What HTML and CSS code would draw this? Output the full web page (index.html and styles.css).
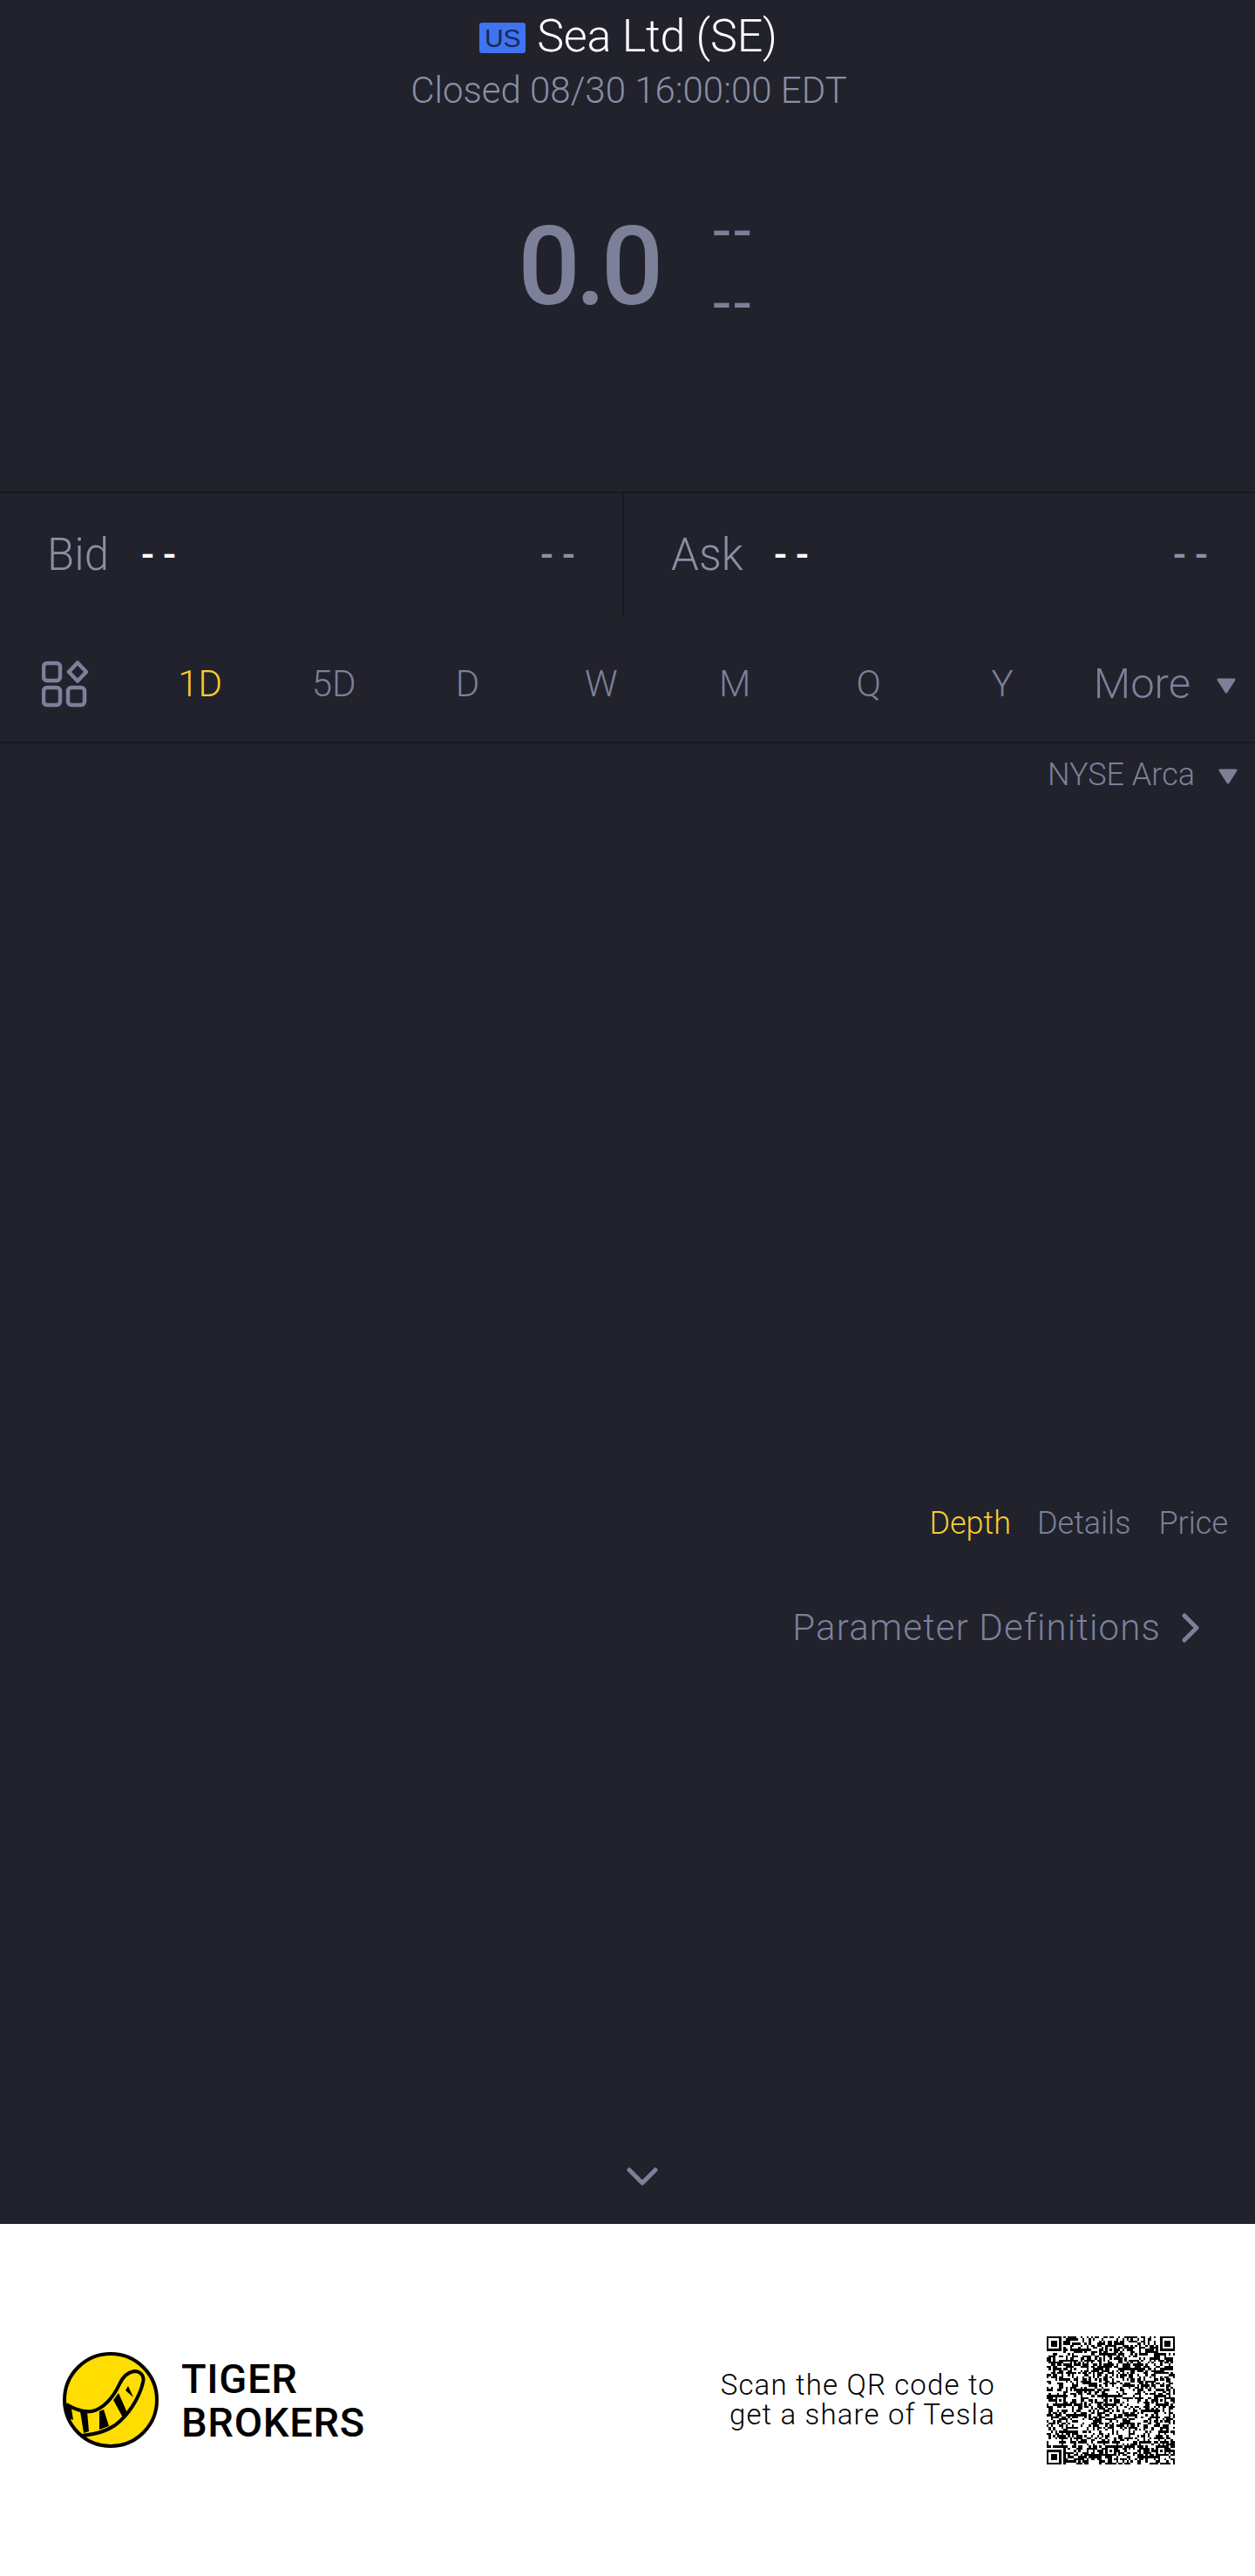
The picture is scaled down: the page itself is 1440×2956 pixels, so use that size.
FILE: index.html
```html
<!DOCTYPE html>
<html lang="en">
<head>
    <meta charset="UTF-8" />
    <title>Sea Ltd (SE)</title>
    <link rel="stylesheet" href="styles.css">
</head>
<body>
    <div class="quote">
        <div class="head">
            <div class="title"><span class="badge">US</span><span>Sea Ltd (SE)</span></div>
            <div class="status">Closed 08/30 16:00:00 EDT</div>
        </div>
        <div class="price-row">
            <div class="price">0.0</div>
            <div class="change"><span>--</span><span>--</span></div>
        </div>
        <div class="book">
            <div class="side">
                <span class="side-label">Bid</span><span class="dash white">--</span><span class="dash right">--</span>
            </div>
            <div class="side">
                <span class="side-label">Ask</span><span class="dash white">--</span><span class="dash right">--</span>
            </div>
        </div>
        <div class="tabs">
            <div class="tab-icon">
                <svg width="56" height="54" viewBox="0 0 56 54" fill="none" stroke="#7c8099" stroke-width="4.5">
                    <rect x="2" y="3" width="19" height="20" rx="4" />
                    <path d="M41 2.5 L51 13 L41 23.5 L31 13 Z" stroke-linejoin="round" />
                    <rect x="2" y="31" width="19" height="20" rx="4" />
                    <rect x="30" y="31" width="19" height="20" rx="4" />
                </svg>
            </div>
            <div class="tab active">1D</div>
            <div class="tab">5D</div>
            <div class="tab">D</div>
            <div class="tab">W</div>
            <div class="tab">M</div>
            <div class="tab">Q</div>
            <div class="tab">Y</div>
            <div class="tab-more">
                <span>More</span>
                <svg class="tri" width="22" height="18" viewBox="0 0 22 18"><path d="M2 2 H20 L11 16 Z" fill="#7c8099" stroke="#7c8099" stroke-width="3" stroke-linejoin="round" /></svg>
            </div>
        </div>
        <div class="chart">
            <div class="exchange">
                <span>NYSE Arca</span>
                <svg class="tri" width="22" height="18" viewBox="0 0 22 18"><path d="M2 2 H20 L11 16 Z" fill="#7c8099" stroke="#7c8099" stroke-width="3" stroke-linejoin="round" /></svg>
            </div>
            <div class="detail-tabs">
                <span class="active">Depth</span>
                <span>Details</span>
                <span class="last">Price</span>
            </div>
            <div class="params">
                <span>Parameter Definitions</span>
                <svg width="20" height="34" viewBox="0 0 20 34" fill="none" stroke="#7c8099" stroke-width="5" stroke-linecap="round" stroke-linejoin="round"><path d="M3 3 L17 17 L3 31" /></svg>
            </div>
            <div class="collapse">
                <svg width="36" height="22" viewBox="0 0 36 22" fill="none" stroke="#7c8099" stroke-width="5" stroke-linecap="round" stroke-linejoin="round"><path d="M3 3 L18 18 L33 3" /></svg>
            </div>
        </div>
    </div>
    <div class="footer">
        <div class="brand">
            <svg width="112" height="112" viewBox="-1 -1 112 112">
                <circle cx="55" cy="55" r="53" fill="#ffdd00" stroke="#000" stroke-width="4" />
                <path d="M4 60 C14 66 24 69 33 68 C46 66 58 52 65 37 C69 28 75 23 82 22 C90 22 94 28 92 35 C88 52 76 72 60 84 C48 92 34 95 22 96" fill="none" stroke="#000" stroke-width="4" stroke-linejoin="round" />
                <path d="M3 60 L10 65 L12 78 L6 76 Z M20 68 L28 68 L30 91 L24 93 Z M42 68 L47 66 L53 85 L42 89 Z M58 55 L64 47 L75 72 L70 77 Z M72 44 L75 39 L81 52 Z" fill="#000" />
            </svg>
            <div class="brand-name">TIGER<br>BROKERS</div>
        </div>
        <div class="scan">
            <div class="scan-text">Scan the QR code to<br>get a share of Tesla</div>
            <svg id="qr" class="qr" viewBox="0 0 61 61" shape-rendering="crispEdges"></svg>
        </div>
    </div>
    <script src="qr.js"></script>
</body>
</html>
```

FILE: styles.css
```css
* {
    box-sizing: border-box;
}
body {
    margin: 0;
    font-family: Roboto, "Liberation Sans", sans-serif;
    font-weight: 300;
    background: #fff;
}
.quote {
    height: 2552px;
    background: #21222c;
    color: #7c8099;
    display: flex;
    flex-direction: column;
}

/* header */
.head {
    padding-top: 12px;
    text-align: center;
}
.title {
    display: flex;
    justify-content: center;
    align-items: center;
    gap: 13px;
    padding-left: 2px;
    font-size: 52px;
    line-height: 60px;
    letter-spacing: -0.2px;
    color: #fff;
}
.badge {
    width: 53px;
    height: 35px;
    margin-top: 2px;
    border-radius: 3px;
    background: #3f74f0;
    color: #17285c;
    font-family: "Liberation Sans", sans-serif;
    font-weight: 400;
    font-size: 30px;
    line-height: 35px;
    letter-spacing: 0;
    text-align: center;
}
.status {
    margin-top: 7px;
    padding-left: 3px;
    font-size: 42px;
    line-height: 50px;
    color: #8a8fa5;
}

.price-row {
    display: flex;
    justify-content: center;
    align-items: center;
    gap: 62px;
    height: 130px;
    margin-top: 112px;
    padding-left: 20px;
}
.price {
    font-size: 126px;
    font-weight: 500;
    line-height: 130px;
    letter-spacing: -5.5px;
}
.change {
    display: flex;
    flex-direction: column;
    gap: 43px;
    font-size: 72px;
    font-weight: 400;
    line-height: 40px;
    letter-spacing: 4px;
}

/* bid / ask */
.book {
    display: flex;
    height: 142px;
    margin-top: 193px;
    border-top: 2px solid #181921;
}
.side {
    width: 724px;
    display: flex;
    align-items: center;
    padding: 0 54px;
    font-size: 51px;
}
.side:first-child {
    width: 716px;
    border-right: 2px solid #181921;
}
.side-label {
    width: 108px;
    color: #8a8fa5;
}
.side:last-child .side-label {
    width: 118px;
}
.dash {
    font-size: 44px;
    font-weight: 500;
    letter-spacing: 10px;
    margin-right: -10px;
}
.dash.white {
    color: #fff;
}
.dash.right {
    margin-left: auto;
    color: #8a8fa5;
}

/* period tabs */
.tabs {
    display: flex;
    align-items: center;
    height: 147px;
    padding-top: 12px;
    border-bottom: 2px solid #181921;
    font-size: 42px;
}
.tab-icon {
    width: 153px;
    padding: 0 0 0 48px;
    display: flex;
}
.tab {
    width: 153.4px;
    text-align: center;
}
.active {
    color: #f5cf2f;
}
.tab-more {
    display: flex;
    align-items: center;
    gap: 30px;
    margin-left: 28px;
    font-size: 49px;
}
.tri {
    display: block;
    margin-top: 4px;
}

/* chart area */
.chart {
    flex: 1;
    display: flex;
    flex-direction: column;
}
.exchange {
    display: flex;
    justify-content: flex-end;
    align-items: center;
    gap: 27px;
    height: 40px;
    margin-top: 16px;
    padding-right: 20px;
    font-size: 36px;
}
.detail-tabs {
    display: flex;
    justify-content: flex-end;
    gap: 30px;
    margin-top: 818px;
    padding-right: 31px;
    font-size: 36px;
    line-height: 42px;
}
.detail-tabs .last {
    margin-left: 2px;
}
.params {
    display: flex;
    justify-content: flex-end;
    align-items: center;
    gap: 24px;
    margin-top: 74px;
    padding-right: 64px;
    font-size: 42px;
    line-height: 50px;
    letter-spacing: 1.15px;
}
.collapse {
    display: flex;
    justify-content: center;
    margin-top: 594px;
    padding-left: 33px;
}

/* footer */
.footer {
    height: 404px;
    background: #fff;
    display: flex;
    justify-content: space-between;
    align-items: center;
    padding: 0 92px 0 71px;
}
.brand {
    display: flex;
    align-items: center;
    gap: 25px;
}
.brand-name {
    margin-top: 2px;
    font-size: 47px;
    font-weight: 500;
    line-height: 50px;
    letter-spacing: 0.7px;
    color: #000;
}
.scan {
    display: flex;
    align-items: center;
    gap: 59px;
}
.scan-text {
    font-size: 33px;
    line-height: 34px;
    letter-spacing: 1.15px;
    text-align: right;
    color: #000;
}
.qr {
    display: block;
    width: 147px;
    height: 147px;
}
```

FILE: qr.js
```js
// draws the QR block: fixed patterns plus seeded modules
const size = 61;
const grid = [];
let seed = 20240830;

function next() {
    seed = (seed * 1103515245 + 12345) & 0x7fffffff;
    return (seed >> 16) & 1;
}

for (let y = 0; y < size; y++) {
    grid.push([]);
    for (let x = 0; x < size; x++) grid[y].push(next());
}

function pattern(px, py, n, clear) {
    for (let y = -clear; y < n + clear; y++) {
        for (let x = -clear; x < n + clear; x++) {
            const gx = px + x, gy = py + y;
            if (gx < 0 || gy < 0 || gx >= size || gy >= size) continue;
            const ring = Math.min(x, y, n - 1 - x, n - 1 - y);
            grid[gy][gx] = ring < 0 ? 0 : (ring % 2 === 0 ? 1 : 0);
        }
    }
}

function finder(px, py) {
    pattern(px, py, 7, 1);
    for (let i = 2; i < 5; i++) {
        for (let j = 2; j < 5; j++) grid[py + j][px + i] = 1;
    }
}

[[28, 4], [52, 4], [4, 28], [28, 28], [52, 28], [4, 52], [28, 52], [52, 52]].forEach(p => pattern(p[0], p[1], 5, 0));
finder(0, 0);
finder(54, 0);
finder(0, 54);

let d = '';
for (let y = 0; y < size; y++) {
    for (let x = 0; x < size; x++) {
        if (grid[y][x]) d += 'M' + x + ' ' + y + 'h1v1h-1z';
    }
}
const path = document.createElementNS('http://www.w3.org/2000/svg', 'path');
path.setAttribute('d', d);
document.getElementById('qr').appendChild(path);
```
